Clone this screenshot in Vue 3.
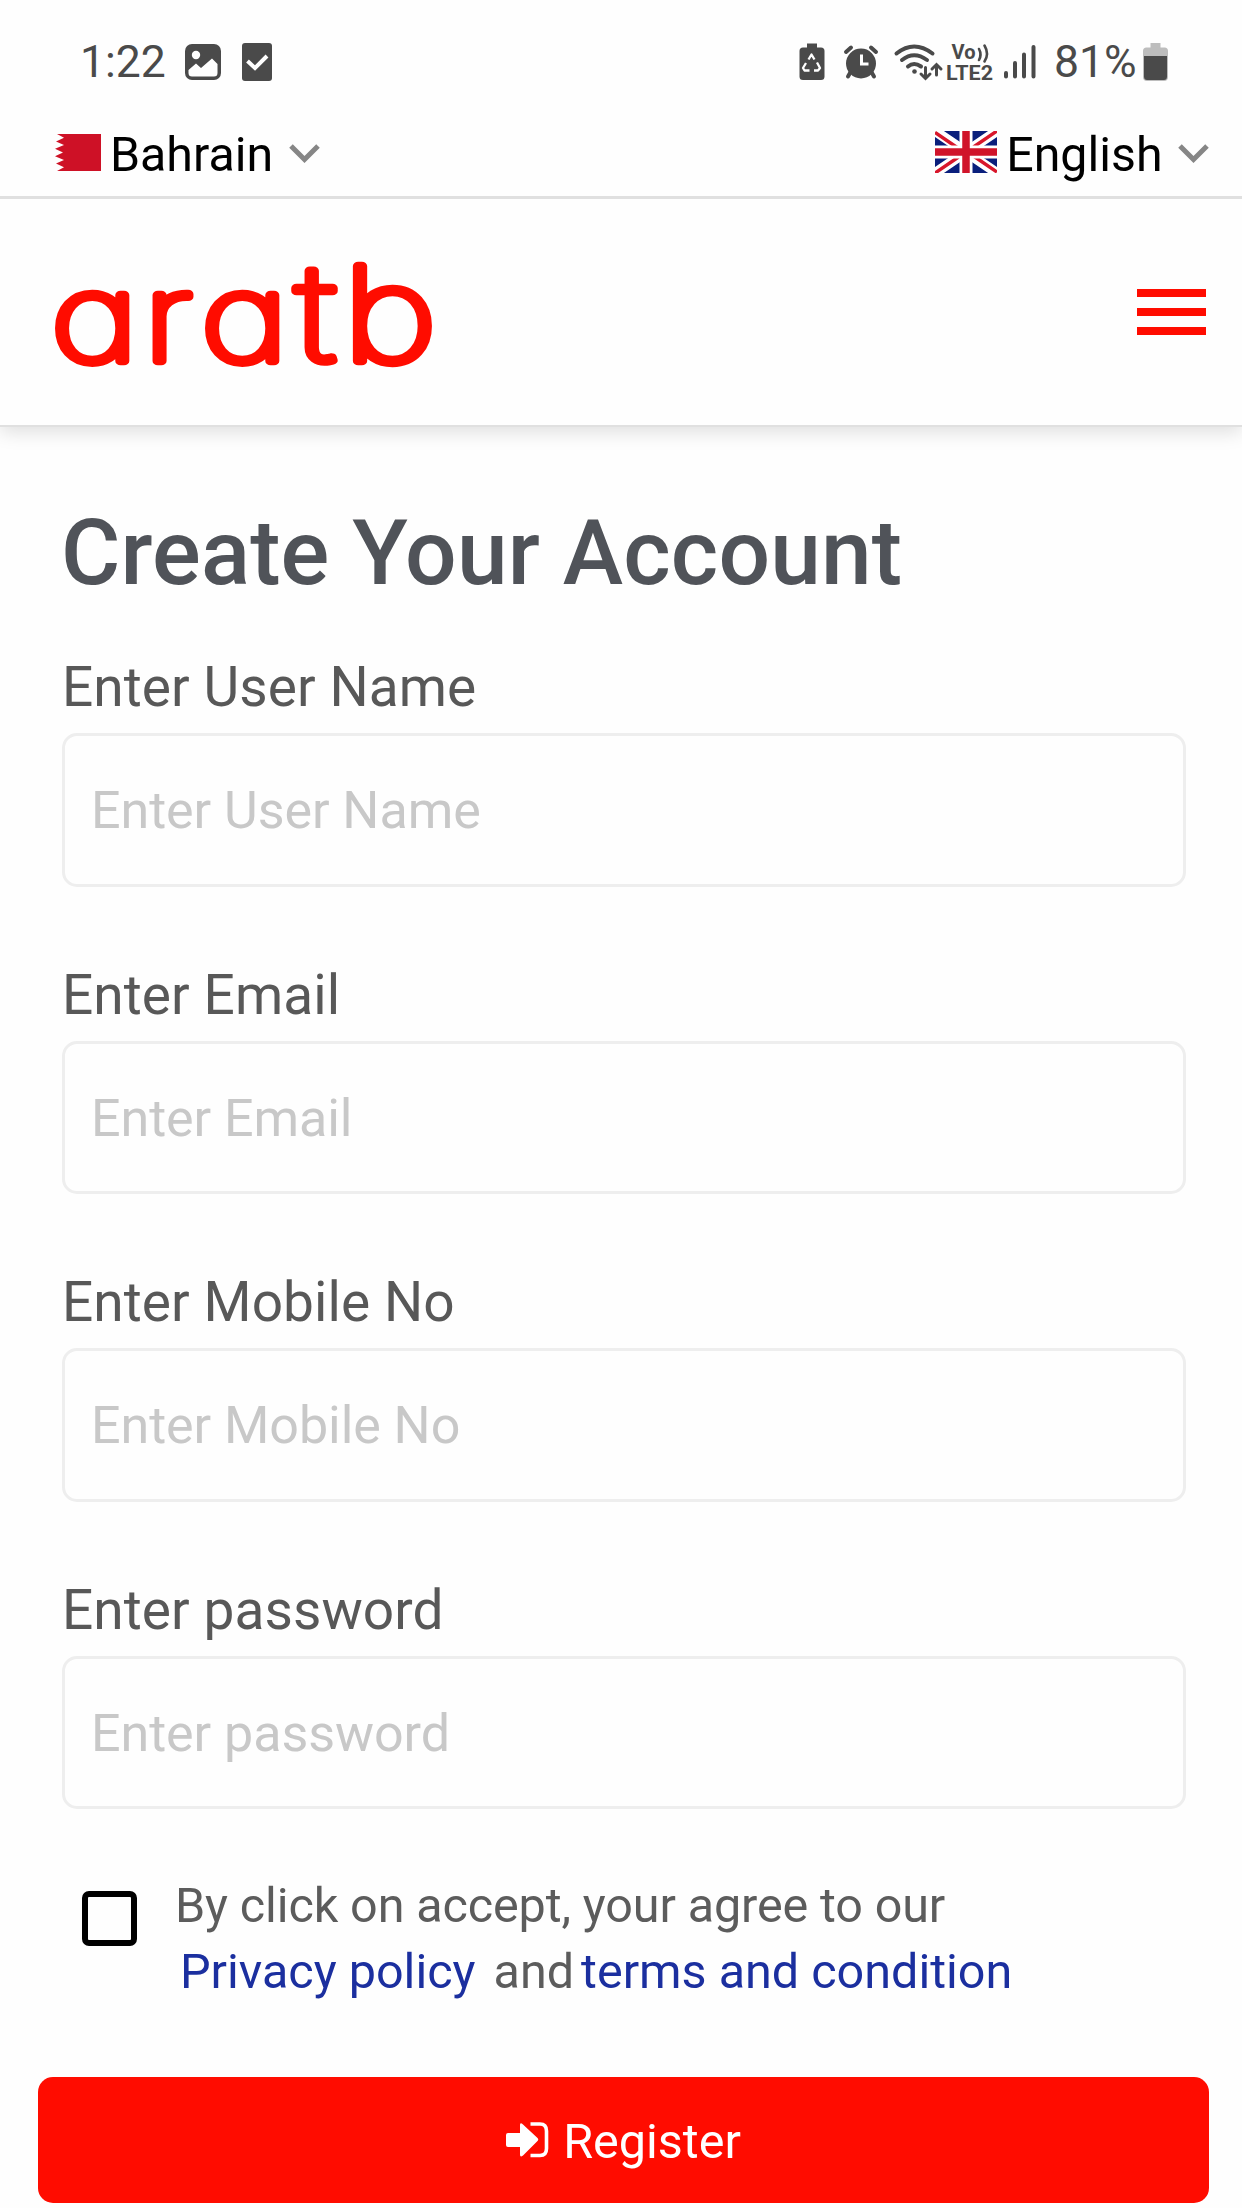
<script setup>
import { ref } from 'vue'

const fields = ref([
  { id: 'name', label: 'Enter User Name', type: 'text' },
  { id: 'email', label: 'Enter Email', type: 'email' },
  { id: 'mobile', label: 'Enter Mobile No', type: 'tel' },
  { id: 'password', label: 'Enter password', type: 'password' },
])
</script>

<template>
  <div class="screen">
    <div class="status">
      <span class="clock">1:22</span>
      <svg class="s-img" width="36" height="36" viewBox="0 0 36 36">
        <rect width="36" height="36" rx="7" fill="#4a4a4a" />
        <circle cx="11" cy="11" r="4.2" fill="#fff" />
        <path d="M3.5 26 L11 19.5 L16 24 L27 14.5 L32.5 20 V29 Q32.5 32.5 29 32.5 H7 Q3.5 32.5 3.5 29 Z" fill="#fff" />
      </svg>
      <svg class="s-check" width="30" height="38" viewBox="0 0 30 38">
        <rect width="30" height="38" rx="3" fill="#4a4a4a" />
        <path d="M5.5 18 L13 25 L25 13" fill="none" stroke="#fff" stroke-width="4" />
      </svg>
      <span class="spacer"></span>
      <svg class="s-right" width="255" height="40" viewBox="799 42 255 40">
        <g fill="#4a4a4a">
          <path d="M807 43.5h10v4h4q3.500 0 3.500 3.500v25.500q0 3.500-3.500 3.500h-18q-3.500 0-3.500-3.500v-25.500q0-3.500 3.500-3.500h4z" />
          <circle cx="861" cy="63.500" r="15" />
        </g>
        <path d="M808.500 59.500l3-5 3 5M817 62.500l3 5.500-2 2.500h-4M809.500 70.500h-5l-1.500-2.500 3-5" fill="none" stroke="#fff" stroke-width="2.300" stroke-linejoin="round" />
        <g fill="none" stroke="#4a4a4a" stroke-linecap="round">
          <path d="M846 52l5-4.500M876 52l-5-4.500" stroke-width="4" />
          <path d="M850 73l-2 3.500M872 73l2 3.500" stroke-width="4" />
          <path d="M896.500 53.500Q914 39.500 932.500 53.500" stroke-width="4" />
          <path d="M902 60Q914 50.500 927 60" stroke-width="4" />
          <path d="M908 66.500Q914 61.500 921 66.500" stroke-width="4" />
          <path d="M925.500 67.500v10.500M921 74l4.500 4.500 4.500-4.500M936.500 75v-10.500M932 69l4.500-4.500 4.500 4.500" stroke-width="3" />
          <path d="M1006 73v3.500M1015 63v13.500M1024 54.500v22M1033.500 47v29.500" stroke-width="4" />
          <path d="M979 49q3 5.500 0 11M984.500 45.500q5 8.500 0 16" stroke-width="2.600" />
        </g>
        <circle cx="914.500" cy="71.500" r="2.300" fill="#4a4a4a" />
        <path d="M861.500 54.500v9.500h7" fill="none" stroke="#fff" stroke-width="3" />
        <g fill="#4a4a4a" class="volte">
          <text x="951.500" y="58.500" font-size="20" textLength="24" lengthAdjust="spacingAndGlyphs">Vo</text>
          <text x="946" y="79.500" font-size="20.500" textLength="47" lengthAdjust="spacingAndGlyphs">LTE2</text>
        </g>
      </svg>
      <span class="percent">81%</span>
      <svg class="s-batt" width="25" height="38" viewBox="0 0 25 38">
        <path d="M7.500 0h10v4.500h4q3.500 0 3.500 3.500v26q0 4-4 4h-17q-4 0-4-4v-26q0-3.500 3.500-3.500h4z" fill="#bdbdbd" />
        <path d="M1 13h23v20.500q0 3.500-3 3.500h-17q-3 0-3-3.500z" fill="#4a4a4a" />
      </svg>
    </div>

    <div class="selectors">
      <div class="pick">
        <svg class="flag-bh" width="46" height="37" viewBox="0 0 46 37">
          <path d="M2 0H46V37H2L9 33.300L1 29.600L9 25.900L0 22.200L8 18.500L0 14.800L9 11.100L1 7.400L9 3.700Z" fill="#ce1126" />
        </svg>
        <span>Bahrain</span>
        <svg class="chev" width="31" height="20" viewBox="0 0 31 20">
          <path d="M2 2L15.500 15.500L29 2" fill="none" stroke="#868686" stroke-width="5" />
        </svg>
      </div>
      <div class="pick">
        <svg class="flag-uk" width="62" height="42" viewBox="0 0 62 42">
          <rect width="62" height="42" fill="#0a1f7c" />
          <path d="M0 0L62 42M62 0L0 42" stroke="#fff" stroke-width="10" />
          <path d="M0 1.500L25 18.500M62 0L37 17M0 42L25 25M37 24L62 41" stroke="#d8172b" stroke-width="3.500" />
          <path d="M31 0V42M0 21H62" stroke="#fff" stroke-width="13" />
          <path d="M31 0V42M0 21H62" stroke="#d0142a" stroke-width="7.500" />
        </svg>
        <span>English</span>
        <svg class="chev" width="31" height="20" viewBox="0 0 31 20">
          <path d="M2 2L15.500 15.500L29 2" fill="none" stroke="#868686" stroke-width="5" />
        </svg>
      </div>
    </div>

    <header class="header">
      <svg class="logo" width="384" height="144" viewBox="-4 -16 384 144">
        <text class="wordmark" transform="scale(1.25 1)" y="104.500" x="-1 73 119 195 232.500">ara<tspan class="t">t</tspan><tspan class="b">b</tspan></text>
      </svg>
      <div class="burger"><i></i><i></i><i></i></div>
    </header>

    <main class="form">
      <h1>Create Your Account</h1>
      <div class="fields">
        <div v-for="f in fields" :key="f.id" class="field">
          <label :for="f.id">{{ f.label }}</label>
          <input :id="f.id" :type="f.type" :placeholder="f.label" />
        </div>
      </div>
      <div class="agree">
        <span class="box"></span>
        <div class="terms">
          <div class="first">By click on accept, your agree to our</div>
          <div class="second"><a>Privacy policy</a><span class="and">and</span><a>terms and condition</a></div>
        </div>
      </div>
      <button class="register">
        <svg width="43" height="36" viewBox="0 0 43 36">
          <path d="M2 11H14V3Q14 0 17 2.500L31.500 16Q33 17.500 31.500 19L17 33.500Q14 36 14 32.500V25H2Q0 25 0 23V13Q0 11 2 11Z" fill="#fff" />
          <path d="M24.500 2H34Q40.500 2 40.500 9V26.500Q40.500 33.500 34 33.500H24.500" fill="none" stroke="#fff" stroke-width="3.600" />
        </svg>
        <span>Register</span>
      </button>
    </main>
  </div>
</template>

<style>
body {
  background: #fefefe;
}
</style>

<style scoped>
.screen {
  width: 1242px;
  height: 2208px;
  overflow: hidden;
  box-sizing: border-box;
  background: #fefefe;
  font-family: Roboto, "Liberation Sans", sans-serif;
}
.status {
  box-sizing: border-box;
  height: 112px;
  padding: 12px 74px 0 80px;
  display: flex;
  align-items: center;
  color: #4a4a4a;
  font-size: 44.500px;
}
.clock {
  width: 105px;
}
.s-check {
  margin-left: 21px;
}
.spacer {
  flex: 1;
}
.s-right {
  overflow: visible;
}
.volte {
  font-weight: 700;
}
.percent {
  width: 85px;
  margin-right: 4px;
  white-space: nowrap;
}
.selectors {
  box-sizing: border-box;
  position: relative;
  z-index: 1;
  height: 87px;
  background: #fefefe;
  border-bottom: 3px solid #e0e0e0;
  padding: 0 33px 0 54.500px;
  display: flex;
  justify-content: space-between;
  align-items: center;
  font-size: 48.300px;
  color: #000;
}
.pick {
  display: flex;
  align-items: center;
}
.flag-bh {
  margin: 0 9.500px 3px 0;
}
.flag-uk {
  margin: 0 9.500px 5px 0;
}
.chev {
  margin-left: 15.500px;
}
.header {
  box-sizing: border-box;
  height: 228px;
  padding: 0 36px 0 47.500px;
  display: flex;
  justify-content: space-between;
  align-items: center;
  border-bottom: 2px solid #e0e0e0;
  box-shadow: 0 5px 18px rgba(0, 0, 0, 0.13);
}
.logo {
  overflow: visible;
}
.wordmark {
  font-family: Inter, sans-serif;
  font-weight: 100;
  font-size: 121px;
  font-feature-settings: "cv11" 1;
  fill: #ff0c00;
  stroke: #ff0c00;
  stroke-width: 8.500px;
  stroke-linejoin: round;
}
.wordmark .t {
  font-size: 133px;
}
.wordmark .b {
  font-size: 130px;
}
.burger {
  width: 69px;
  display: flex;
  flex-direction: column;
  gap: 11px;
}
.burger i {
  height: 8px;
  background: #ff0c00;
}
.form {
  padding: 76px 33px 0 38px;
}
h1 {
  margin: 0 0 52px 23px;
  font-size: 91px;
  line-height: 100px;
  font-weight: 500;
  letter-spacing: 0.150px;
  color: #505359;
}
.fields {
  display: flex;
  flex-direction: column;
  gap: 77px;
  padding: 0 23px 0 24px;
}
.field {
  display: flex;
  flex-direction: column;
  gap: 14px;
}
label {
  font-size: 55px;
  line-height: 64px;
  letter-spacing: 0.080px;
  color: #585858;
}
input {
  box-sizing: border-box;
  width: 100%;
  height: 153.500px;
  margin-bottom: -1px;
  border: 3px solid #eee;
  border-radius: 15px;
  padding: 2px 27px 0 26px;
  background: #fefefe;
  font-family: inherit;
  font-size: 52px;
  letter-spacing: -0.060px;
}
input::placeholder {
  color: #c8c8c8;
  opacity: 1;
}
.agree {
  margin-top: 64.500px;
  display: flex;
  padding-left: 44px;
  font-size: 48.500px;
  line-height: 66px;
  color: #5c5c5c;
}
.box {
  box-sizing: border-box;
  width: 55px;
  height: 55px;
  margin: 18.500px 38px 0 0;
  border: 6.500px solid #000;
  border-radius: 7px;
}
.terms {
  white-space: nowrap;
}
.first {
  letter-spacing: -0.120px;
}
.second {
  display: flex;
  padding-left: 5px;
}
.terms a {
  color: #1b2f9f;
}
.and {
  margin: 0 7px 0 18px;
}
.register {
  width: 1171px;
  height: 126px;
  margin-top: 72.500px;
  padding: 0;
  border: 0;
  border-radius: 15px;
  background: #ff0c00;
  color: #fff;
  font-family: inherit;
  font-size: 48.500px;
  display: flex;
  align-items: center;
  justify-content: center;
  gap: 14px;
}
.register span {
  padding-top: 3px;
}
</style>
